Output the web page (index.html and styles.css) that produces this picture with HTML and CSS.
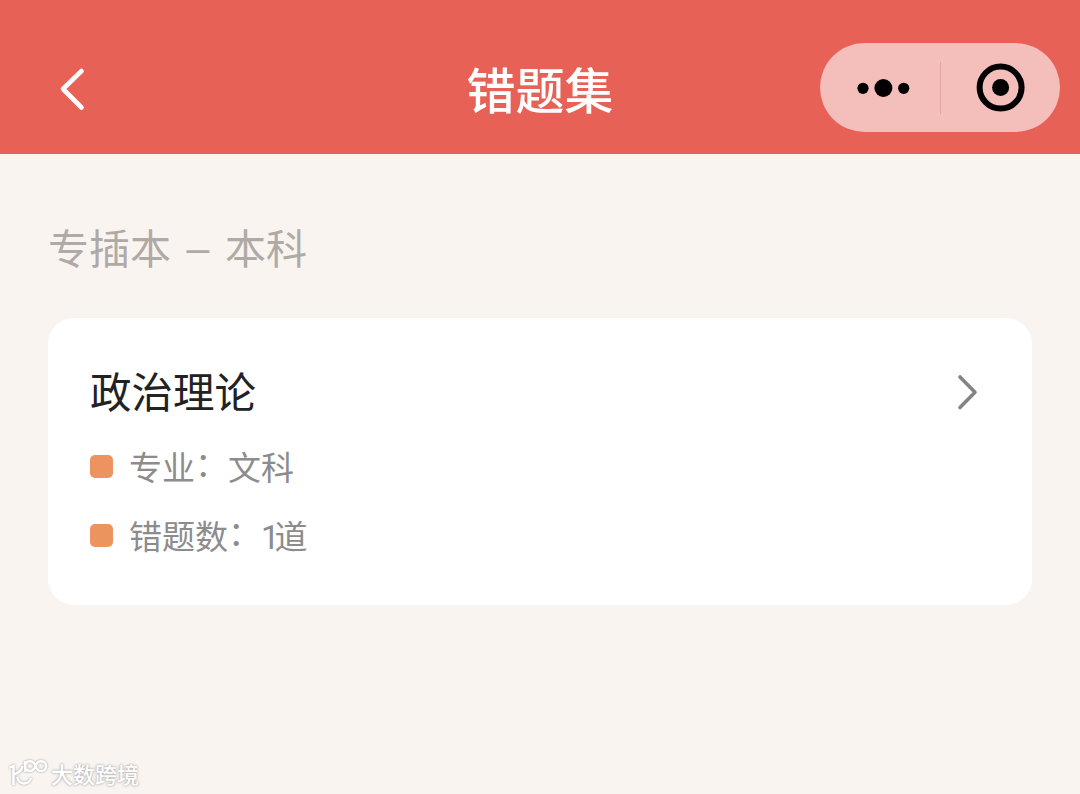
FILE: index.html
```html
<!DOCTYPE html>
<html lang="zh-CN">
<head>
<meta charset="UTF-8">
<title>错题集</title>
<meta name="viewport" content="width=device-width, initial-scale=1.0">
<link rel="stylesheet" href="styles.css">
</head>
<body>
<header class="navbar">
  <a class="back" href="#" aria-label="返回">
    <svg width="30" height="48" viewBox="0 0 30 48"><path d="M24.5 7L6 25L24.5 43.5" /></svg>
  </a>
  <h1>错题集</h1>
  <div class="capsule">
    <svg width="240" height="89" viewBox="0 0 240 89">
      <circle cx="43" cy="45.3" r="5.6" />
      <circle cx="63.4" cy="45" r="9" />
      <circle cx="83.7" cy="45.3" r="5.6" />
      <path class="divider" d="M120.5 19V71" />
      <circle class="ring" cx="180.6" cy="44.6" r="21" />
      <circle cx="180.6" cy="44.6" r="8.5" />
    </svg>
  </div>
</header>

<main>
  <h2>专插本 <span class="dash">–</span> 本科</h2>
  <section class="card">
    <div class="card-head">
      <h3>政治理论</h3>
      <svg class="arrow" width="24" height="40" viewBox="0 0 24 40"><path d="M4 5L19 20.3L4 35.5" /></svg>
    </div>
    <ul>
      <li><p>专业<span class="colon">：</span>文科</p></li>
      <li><p>错题数<span class="colon">：</span><span class="num">1</span>道</p></li>
    </ul>
  </section>
</main>

<footer class="watermark">
  <svg width="42" height="32" viewBox="0 0 42 32">
    <path d="M2.5 9.5L6.5 8V27M15.5 8C15 12 11 15 7 16.5M10.5 19C11 27 22 28 24 20" />
    <path d="M18 3V14M18 8C19 1.5 26.5 1.5 28.5 8C30.5 14.5 39 14.5 39 8C39 1.5 30.5 1.5 28.5 8C26.5 14.5 19 14.5 18 8" />
  </svg>
  <span>大数跨境</span>
</footer>
</body>
</html>
```

FILE: styles.css
```css
* { box-sizing: border-box; }
body { margin: 0; height: 794px; overflow: hidden; display: flex; flex-direction: column; background: #f9f4f0; font-family: "Noto Sans CJK SC", sans-serif; }
h1, h2, h3, ul, p { margin: 0; padding: 0; font-weight: normal; }
svg { display: block; fill: none; }

.navbar { height: 154px; padding: 43px 20px 0 57px; display: grid; grid-template-columns: 240px 1fr 240px; align-items: start; background: #e76156; }
.back { padding-top: 21px; }
.back path { stroke: #fff; stroke-width: 4.6; stroke-linecap: round; stroke-linejoin: round; }
.navbar h1 { padding-right: 37px; color: #fff; font-size: 49px; font-weight: 500; line-height: 90px; text-align: center; }
.capsule { height: 89px; border-radius: 45px; background: #f4bebb; }
.capsule circle { fill: #000; }
.capsule .ring { fill: none; stroke: #000; stroke-width: 6; }
.capsule .divider { stroke: #dfa6a4; stroke-width: 1; }

main { flex: 1; padding: 62px 48px 0; }
h2 { height: 60px; color: #b0aaa6; font-size: 41px; line-height: 60px; word-spacing: 6.4px; }
.dash { font-family: "Liberation Sans", sans-serif; line-height: 0; vertical-align: 2px; }
.card { height: 287px; margin-top: 42px; padding: 42px 52px 0 42px; border-radius: 26px; background: #fff; }
.card-head { display: flex; align-items: center; justify-content: space-between; }
h3 { color: #222; font-size: 41.5px; line-height: 60px; }
.arrow { margin-top: 4px; }
.arrow path { stroke: #848484; stroke-width: 3.6; stroke-linecap: round; stroke-linejoin: round; }
.card ul { margin-top: 12px; list-style: none; }
.card li { display: flex; align-items: center; gap: 16px; height: 69px; color: #8c8c8c; font-size: 33px; }
.card li::before { content: ""; width: 23px; height: 23px; border-radius: 5px; background: #ec9360; }
.card li p { padding-bottom: 2px; line-height: 50px; }
.colon { line-height: 0; vertical-align: 4px; }
.num { font-family: Roboto, sans-serif; line-height: 0; letter-spacing: -5px; }

.watermark { display: flex; align-items: center; gap: 2px; height: 40px; padding-left: 7px; color: #fff; font-size: 22px; font-weight: 500; line-height: 36px; text-shadow: 0 0 2px #aaa, 0 0 3px #bbb; }
.watermark span { padding-bottom: 2px; }
.watermark svg { filter: drop-shadow(0 0 1px #999); }
.watermark path { stroke: #fff; stroke-width: 2.5; }
```
